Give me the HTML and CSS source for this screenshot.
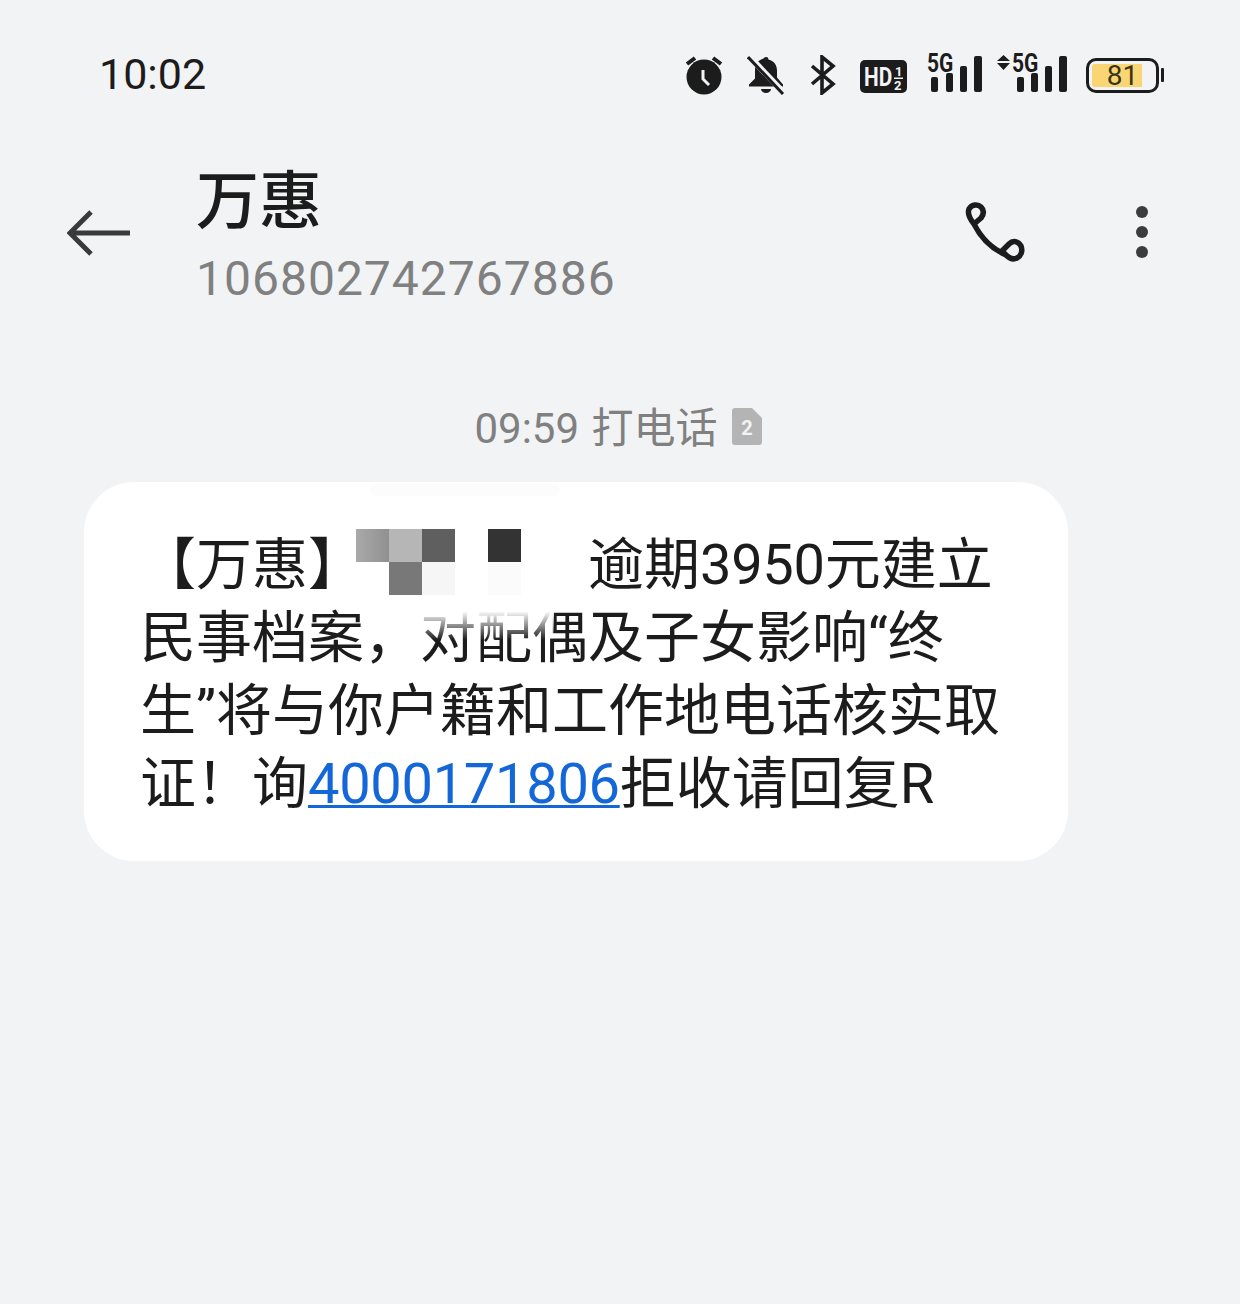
FILE: index.html
```html
<!DOCTYPE html>
<html lang="zh-CN">
<head>
  <meta charset="UTF-8">
  <title>万惠</title>
  <link rel="stylesheet" href="styles.css">
</head>
<body>
  <div class="status-bar">
    <span class="clock">10:02</span>
    <div class="status-icons">
      <svg class="ic-alarm" viewBox="0 0 38 40" width="38" height="40">
        <path d="M2 9 L10 3 M36 9 L28 3" stroke="#1c1c1c" stroke-width="4" fill="none"/>
        <circle cx="19" cy="22" r="17.5" fill="#1c1c1c"/>
        <path d="M18 15 V24 L24 30" stroke="#f2f3f5" stroke-width="3" fill="none"/>
      </svg>
      <svg class="ic-bell" viewBox="0 0 38 40" width="38" height="40">
        <path d="M19 2 a2.500 2.500 0 0 1 2.500 2.600 c6 1.500 8.500 6 8.500 11 v7 l6 7 v2 H2 v-2 l6-6 v-9 c0-5 3-9.500 8.500-11 A2.500 2.500 0 0 1 19 2z" fill="#1c1c1c"/>
        <path d="M14 34 h10 a5 4 0 0 1 -10 0z" fill="#1c1c1c"/>
        <path d="M2 1 L37 38" stroke="#f2f3f5" stroke-width="6"/>
        <path d="M1 2 L36 39" stroke="#1c1c1c" stroke-width="3"/>
      </svg>
      <svg class="ic-bt" viewBox="0 0 26 40" width="26" height="40">
        <path d="M2 11 L23 29 L12 38 V2 L23 11 L2 29" stroke="#1c1c1c" stroke-width="3.600" fill="none"/>
      </svg>
      <svg class="ic-hd" viewBox="0 0 47 33" width="47" height="33">
        <rect width="47" height="33" rx="5" fill="#1c1c1c"/>
        <text class="hd-big" transform="translate(4 26) scale(0.8 1)">HD</text>
        <text class="hd-small" x="35" y="16">1</text>
        <rect class="hd-bar" x="34" y="17.500" width="9" height="1.500"/>
        <text class="hd-small" x="34" y="30">2</text>
      </svg>
      <svg class="ic-signal" viewBox="0 -6 56 44" width="56" height="44">
        <text class="net" transform="translate(0 18) scale(0.84 1)">5G</text>
        <rect x="4" y="23" width="7" height="15" rx="2"/>
        <rect x="19" y="19" width="7" height="19" rx="2"/>
        <rect x="33" y="12" width="7" height="26" rx="2"/>
        <rect x="47" y="2" width="8" height="36" rx="2"/>
      </svg>
      <svg class="ic-signal2" viewBox="0 -6 70 44" width="70" height="44">
        <path d="M0 7 L6.500 1 L13 7z M0 9 H13 L6.500 16z" fill="#1c1c1c"/>
        <text class="net" transform="translate(15 18) scale(0.84 1)">5G</text>
        <rect x="20" y="23" width="7" height="15" rx="2"/>
        <rect x="34" y="19" width="7" height="19" rx="2"/>
        <rect x="48" y="12" width="7" height="26" rx="2"/>
        <rect x="62" y="2" width="8" height="36" rx="2"/>
      </svg>
      <div class="battery">
        <div class="battery-body">
          <div class="battery-fill"></div>
          <span class="battery-num">81</span>
        </div>
        <div class="battery-tip"></div>
      </div>
    </div>
  </div>

  <header class="top-bar">
    <svg class="back" viewBox="0 0 64 46" width="64" height="46">
      <path d="M63 23 H3 M24 2 L3 23 L24 44" stroke="#3a3a3a" stroke-width="5" fill="none"/>
    </svg>
    <div class="contact">
      <h1 class="contact-name">万惠</h1>
      <div class="contact-num">106802742767886</div>
    </div>
    <svg class="call" viewBox="0 0 60 60" width="60" height="60">
      <path d="M9 22 C5 17 2 12 4 7 C7 2 13 2 16 5 C19 8 19 12 16 16 L9 22 C15 34 25 46 41 53 L37 49 L44 42 C48 38 53 39 56 44 C58 49 56 54 52 56 C48 58 44 56 41 53" stroke="#1c1c1c" stroke-width="5.500" fill="none" stroke-linejoin="round" stroke-linecap="round"/>
    </svg>
    <div class="more">
      <span class="dot"></span>
      <span class="dot"></span>
      <span class="dot"></span>
    </div>
  </header>

  <div class="msg-time">
    <span class="msg-label">09:59 打电话</span>
    <svg class="sim" viewBox="0 0 30 37" width="30" height="37">
      <path d="M3 0 H20 L30 10 V34 a3 3 0 0 1 -3 3 H3 a3 3 0 0 1 -3 -3 V3 a3 3 0 0 1 3 -3z" fill="#b4b4b4"/>
      <text class="sim-num" x="15" y="27">2</text>
    </svg>
  </div>

  <div class="bubble">
    <div class="bubble-smudge"></div>
    <p class="bubble-text">【万惠】<span class="redact"><span class="mosaic">
      <i class="m1"></i><i class="m2"></i><i class="m3"></i><i></i><i class="m4"></i>
      <i class="m5"></i><i class="m6"></i><i class="m7"></i><i></i><i class="m8"></i>
    </span></span>逾期<span class="num">3950</span>元建立<br>民事档案，对配偶及子女影响“终<br>生”将与你户籍和工作地电话核实取<br>证！询<a class="tel num" href="#">4000171806</a>拒收请回复R</p>
    <div class="text-fade"></div>
  </div>
</body>
</html>
```

FILE: styles.css
```css
* {
  margin: 0;
  padding: 0;
  box-sizing: border-box;
}

body {
  min-height: 1304px;
  background: #f2f3f5;
  color: #1c1c1c;
  font-family: Roboto, "Noto Sans CJK SC", sans-serif;
}

.status-bar {
  display: flex;
  align-items: center;
  justify-content: space-between;
  height: 40px;
  margin-top: 55px;
  padding: 0 76px 0 99px;
}

.clock {
  font-size: 43px;
  margin-top: -2px;
}

.status-icons {
  display: flex;
  align-items: center;
}

.status-icons svg {
  display: block;
}

.ic-bell { margin-left: 24px; }
.ic-bt { margin-left: 25px; }
.ic-hd { margin-left: 24px; margin-top: 3px; }
.ic-signal { margin-left: 20px; margin-top: -10px; }
.ic-signal2 { margin-left: 14px; margin-top: -10px; }
.ic-signal rect, .ic-signal2 rect { fill: #1c1c1c; }

.hd-big {
  font: bold 26px Roboto, sans-serif;
  fill: #f2f3f5;
}

.hd-small {
  font: bold 13px Roboto, sans-serif;
  fill: #f2f3f5;
}

.hd-bar {
  fill: #f2f3f5;
}

.net {
  font: bold 25px Roboto, sans-serif;
  fill: #1c1c1c;
}

.battery {
  display: flex;
  align-items: center;
  gap: 2px;
  margin-left: 19px;
}

.battery-body {
  position: relative;
  width: 73px;
  height: 35px;
  border: 3px solid #1c1c1c;
  border-radius: 10px;
  display: flex;
  align-items: center;
  justify-content: center;
}

.battery-fill {
  position: absolute;
  left: 3px;
  top: 3px;
  bottom: 3px;
  width: 50px;
  background: #f9d673;
  border-radius: 3px 0 0 3px;
}

.battery-num {
  position: relative;
  font-size: 28px;
  color: #3a3414;
}

.battery-tip {
  width: 3px;
  height: 14px;
  background: #1c1c1c;
  border-radius: 1px;
}

.top-bar {
  display: flex;
  align-items: center;
  margin-top: 70px;
  padding-left: 67px;
  height: 130px;
}

.back {
  margin-top: 6px;
}

.contact {
  margin: 13px 0 0 65px;
  flex: 1;
}

.contact-name {
  font-size: 63px;
  font-weight: 500;
  line-height: 74px;
}

.contact-num {
  margin-top: 11px;
  font-size: 48px;
  letter-spacing: 1px;
  line-height: 58px;
  color: #808080;
}

.call {
  margin-right: 111px;
  margin-top: 4px;
}

.more {
  display: flex;
  flex-direction: column;
  gap: 8px;
  margin-right: 92px;
  margin-top: 4px;
}

.dot {
  width: 12px;
  height: 12px;
  border-radius: 50%;
  background: #3c3c3c;
}

.msg-time {
  display: flex;
  align-items: center;
  justify-content: center;
  gap: 14px;
  margin-top: 106px;
  padding-right: 4px;
  height: 50px;
  font-size: 42px;
  word-spacing: 2px;
  color: #808080;
}

.msg-label {
  margin-bottom: 3px;
}

.bubble {
  position: relative;
  width: 984px;
  height: 379px;
  margin: 31px 0 0 84px;
  padding: 46px 20px 0 56px;
  background: #fff;
  border-radius: 50px;
}

.bubble-text {
  font-size: 56px;
  line-height: 73px;
  white-space: nowrap;
}

.redact {
  position: relative;
  display: inline-block;
  width: 224px;
  height: 1em;
}

.mosaic {
  position: absolute;
  left: -8px;
  top: 1px;
  display: grid;
  grid-template-columns: repeat(5, 33px);
  grid-auto-rows: 33px;
}

.m1 { background: linear-gradient(90deg, #aaa, #909090); }
.m2 { background: #b6b6b6; }
.m3 { background: #5f5f5f; }
.m4 { background: #333; }
.m5 { background: #fff; }
.m6 { background: #787878; }
.m7 { background: #f6f6f6; }
.m8 { background: #fbfbfb; }

.num {
  letter-spacing: -0.3px;
}

.tel {
  color: #1467d8;
  text-decoration: underline;
  text-decoration-thickness: 3px;
}

/* fade left over the retouched part of the second line */
.text-fade {
  position: absolute;
  left: 336px;
  top: 126px;
  width: 134px;
  height: 32px;
  background: linear-gradient(#fff 10%, rgba(255, 255, 255, 0));
}

.bubble-smudge {
  position: absolute;
  left: 286px;
  top: 2px;
  width: 190px;
  height: 12px;
  background: #fcfcfc;
  border-radius: 6px;
}

.sim-num {
  font: bold 20px Roboto, sans-serif;
  fill: #f2f3f5;
  text-anchor: middle;
}
```
